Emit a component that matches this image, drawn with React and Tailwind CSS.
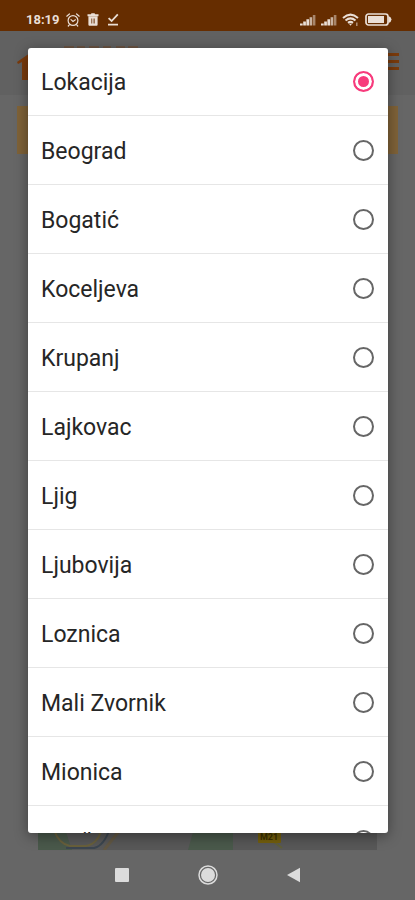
import { useState } from "react";

const places = [
  "Lokacija",
  "Beograd",
  "Bogatić",
  "Koceljeva",
  "Krupanj",
  "Lajkovac",
  "Ljig",
  "Ljubovija",
  "Loznica",
  "Mali Zvornik",
  "Mionica",
  "Osečina",
];

function AlarmIcon() {
  return (
    <svg viewBox="0 0 14 14" className="size-[14px]" fill="none" stroke="currentColor" strokeWidth="1.2" strokeLinecap="round">
      <circle cx="7" cy="7.5" r="4.9" />
      <path d="M0.8 3.2 3.4 1M13.2 3.2 10.6 1M5 6.6l2 1.8 2.4-1.6M3.3 11.8l-1 1.2M10.7 11.8l1 1.2" />
    </svg>
  );
}

function TrashIcon() {
  return (
    <svg viewBox="0 0 12 13" className="h-[13px] w-[12px]" fill="currentColor">
      <path d="M0.5 1.300h3.300L4.500.3h3l.7 1h3.300v2H.5z" />
      <path fillRule="evenodd" d="M1.400 3.300h9.200v8.500q0 1-1 1H2.400q-1 0-1-1zM4.200 5.400v5h.6v-5zm1.600 0v5h.6v-5zm1.600 0v5H8v-5z" />
    </svg>
  );
}

function DoneIcon() {
  return (
    <svg viewBox="0 0 12 13" className="h-[13px] w-[12px]" fill="none" stroke="currentColor" strokeWidth="1.8">
      <path d="M1.600 5.200 4.600 8 10.800 1.400M1 11.600h10" />
    </svg>
  );
}

function SignalIcon() {
  return (
    <svg viewBox="0 0 16 12" className="h-3 w-4" fill="currentColor">
      <path d="M0 9.500h2.700V11.500H0zM3.200 7.500h2.700v4H3.200zM6.400 5.300h2.700v6.200H6.400z" />
      <path opacity=".75" d="M9.600 3.200h2.600v8.300H9.600z" />
      <path opacity=".5" d="M12.800 1h2.600v10.500h-2.600z" />
    </svg>
  );
}

function WifiIcon() {
  return (
    <svg viewBox="0 0 18 14" className="h-[14px] w-[18px]" fill="none" stroke="currentColor" strokeWidth="2">
      <path d="M1 4.900Q8.500-1.600 16 4.900M3.500 7.500q5-4.300 10 0M6 9.900q2.500-2 5 0" />
      <path d="M7 10.800h3l-1.500 1.900z" fill="currentColor" stroke="none" />
      <path d="M14.800 9.500v3.500" strokeWidth="1.400" opacity=".6" />
    </svg>
  );
}

function BatteryIcon() {
  return (
    <svg viewBox="0 0 27 13" className="h-[13px] w-[27px]" fill="none">
      <rect x="1" y="1" width="22" height="11" rx="2.500" stroke="currentColor" strokeWidth="1.700" />
      <rect x="3" y="3" width="16" height="7" fill="currentColor" />
      <path d="M23.500 3q3 1.200 3 3.500t-3 3.500z" fill="currentColor" />
    </svg>
  );
}

function StatusBar() {
  return (
    <div className="flex h-[31px] items-center justify-between bg-[#662d00] pt-2 pr-[23px] pl-[26px] text-[#eadfd6]">
      <div className="flex items-center">
        <span className="w-10 text-[13px] font-bold">18:19</span>
        <AlarmIcon />
        <span className="ml-[7px] flex gap-2">
          <TrashIcon />
          <DoneIcon />
        </span>
      </div>
      <div className="flex items-center gap-[5px]">
        <SignalIcon />
        <SignalIcon />
        <WifiIcon />
        <BatteryIcon />
      </div>
    </div>
  );
}

function Header() {
  return (
    <header className="flex h-16 items-start justify-between bg-[#616161] px-4 pt-3 text-[#7b3b0c]">
      <svg viewBox="0 0 130 40" className="h-10 w-[130px]" fill="currentColor">
        <path d="M1 19 17 8l16 11-1 2-4-2v18H6V19l-4 2z" />
        <path opacity=".35" d="M48 3h10v8H48zM61 3h8v8h-8zM73 3h10v8H73zM87 3h8v8h-8zM100 3h9v8h-9zM112 3h10v8h-10z" />
      </svg>
      <button type="button" aria-label="Meni" className="mt-[10px] flex w-6 flex-col gap-1">
        <span className="h-[3px] bg-[#7b3b0c]" />
        <span className="h-[3px] bg-[#7b3b0c]" />
        <span className="h-[3px] bg-[#7b3b0c]" />
      </button>
    </header>
  );
}

function MapStrip() {
  return (
    <div className="mx-[38px] h-20 overflow-hidden bg-[#585858]">
      <svg viewBox="0 0 339 80" preserveAspectRatio="none" className="h-full w-full" fill="none">
        <path d="M0 50h24l10 30H0zM155 62l40-5v23h-45z" fill="#4a594b" />
        <path d="M16 60q5 14 16 16h16q12-2 16-18" stroke="#69603c" strokeWidth="2" />
        <path d="M28 78h28q10-2 16-20" stroke="#3c4650" strokeWidth="2" />
        <path d="M66 80 82 60" stroke="#625844" strokeWidth="3" />
        <path d="M236 72l8 6" stroke="#5f5f38" strokeWidth="2" />
        <rect x="220" y="58" width="23" height="15" rx="1" fill="#745f0c" />
        <text x="231" y="70" textAnchor="middle" fontSize="9" fontWeight="bold" fill="#3b3000">M21</text>
      </svg>
    </div>
  );
}

function NavBar() {
  return (
    <nav className="flex h-[50px] items-center justify-center gap-[69px] text-[#dcdcdc]">
      <button type="button" aria-label="Nedavne aplikacije">
        <svg viewBox="0 0 14 14" className="size-[14px]" fill="currentColor"><rect width="14" height="14" rx="1" /></svg>
      </button>
      <button type="button" aria-label="Početna">
        <svg viewBox="0 0 20 20" className="size-5" fill="none" stroke="currentColor">
          <circle cx="10" cy="10" r="9" strokeWidth="1.500" />
          <circle cx="10" cy="10" r="7" fill="currentColor" stroke="none" />
        </svg>
      </button>
      <button type="button" aria-label="Nazad">
        <svg viewBox="0 0 14 16" className="h-4 w-[14px]" fill="currentColor"><path d="M0 8 13 .8v14.400z" /></svg>
      </button>
    </nav>
  );
}

export default function App() {
  const [selected, setSelected] = useState("Lokacija");

  return (
    <div className="relative flex h-screen flex-col overflow-hidden bg-[#666666] font-['Roboto',sans-serif]">
      <StatusBar />
      <Header />
      <main className="flex flex-1 flex-col justify-between pt-[11px]">
        <div className="mx-[17px] h-12 bg-[#7f6238]" />
        <MapStrip />
      </main>
      <NavBar />

      <div
        role="dialog"
        aria-label="Lokacija"
        className="absolute top-12 right-[27px] bottom-[67px] left-7 overflow-hidden rounded-[3px] bg-white shadow-[0_3px_14px_rgba(0,0,0,0.4)]"
      >
        <fieldset className="-mt-px divide-y divide-[#e6e6e6]">
          {places.map((place) => (
            <label key={place} className="flex h-[69px] items-center justify-between pr-[14px] pl-[13px] text-[23px] text-[#262626]">
              <span className="pt-[5px]">{place}</span>
              <input
                type="radio"
                name="location"
                checked={selected === place}
                onChange={() => setSelected(place)}
                className="size-[21px] appearance-none rounded-full border-2 border-[#666666] checked:border-[#f73b7c] checked:bg-[#f73b7c] checked:shadow-[inset_0_0_0_3px_white]"
              />
            </label>
          ))}
        </fieldset>
      </div>
    </div>
  );
}
